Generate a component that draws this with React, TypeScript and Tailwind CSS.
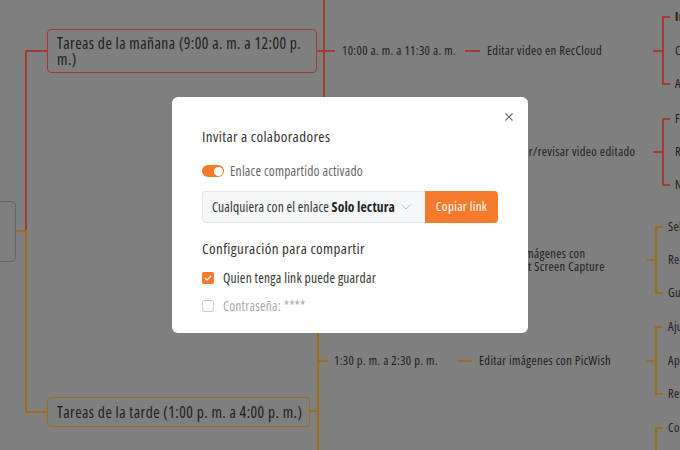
import React from "react";

const RED = "#a23b33";
const GOLD = "#9a6e1a";

function Row({
  x,
  y,
  h = 16,
  time,
  color,
  children,
}: {
  x: number;
  y: number;
  h?: number;
  time: string;
  color: string;
  children: React.ReactNode;
}) {
  return (
    <div
      className="absolute flex items-center text-[12.5px] leading-[14px] tracking-[0.35px] text-[#1d1d1d] whitespace-nowrap"
      style={{ left: x, top: y - h / 2, height: h }}
    >
      <span className="w-[123px]">{time}</span>
      <span className="w-[15px] h-[2px]" style={{ background: color }} />
      <span className="ml-[7px]">{children}</span>
    </div>
  );
}

function Bracket({
  from,
  x,
  top,
  h,
  color,
  labels,
  bold = false,
}: {
  from: number;
  x: number;
  top: number;
  h: number;
  color: string;
  labels: string[];
  bold?: boolean;
}) {
  return (
    <div className="absolute flex items-center" style={{ left: from, top: top - 8, height: h + 16 }}>
      <span className="h-[2px]" style={{ width: x - from, background: color }} />
      <span className="w-[8px] border-l-2 border-y-2" style={{ height: h + 2, borderColor: color }} />
      <div className="ml-[5px] flex h-full flex-col justify-between text-[12.5px] leading-[16px] tracking-[0.35px] text-[#1d1d1d] whitespace-nowrap">
        {labels.map((l, i) => (
          <span key={i} className={bold && i === 0 ? "font-bold" : ""}>
            {l}
          </span>
        ))}
      </div>
    </div>
  );
}

export default function App() {
  return (
    <div className="relative w-[680px] h-[450px] overflow-hidden bg-[#7f7f7f] font-['Open_Sans',sans-serif] [font-stretch:75%]">
      {/* main tree connectors */}
      <svg className="absolute inset-0" width="680" height="450" viewBox="0 0 680 450" fill="none">
        <g stroke={RED} strokeWidth="2">
          <path d="M26 51 V231 M26 51 H47" />
          <path d="M316 51 H335 M324 -5 V152 M324 152 H335" />
        </g>
        <g stroke={GOLD} strokeWidth="2">
          <path d="M15 231 H26 V412 H47" />
          <path d="M309 411 H318 M318 250 V455 M318 260 H328 M318 361 H328" />
        </g>
      </svg>

      {/* root node */}
      <div className="absolute left-[-100px] top-[201px] w-[116px] h-[61px] rounded-[5px] border-[1.5px] border-[#5c6472]" />

      {/* morning node */}
      <div
        className="absolute left-[47px] top-[29px] w-[270px] h-[44px] rounded-[4px] border-[1.5px] flex flex-col justify-center pl-[9px] text-[15.5px] leading-[16.5px] tracking-[0.45px] text-[#1d1d1d]"
        style={{ borderColor: RED }}
      >
        <span className="whitespace-nowrap">Tareas de la mañana (9:00 a. m. a 12:00 p.</span>
        <span>m.)</span>
      </div>

      {/* afternoon node */}
      <div
        className="absolute left-[47px] top-[397px] w-[263px] h-[30px] rounded-[4px] border-[1.5px] flex items-center pl-[9px] text-[15.5px] leading-[16px] tracking-[0.45px] text-[#1d1d1d] whitespace-nowrap"
        style={{ borderColor: GOLD }}
      >
        Tareas de la tarde (1:00 p. m. a 4:00 p. m.)
      </div>

      <Row x={342} y={51} time="10:00 a. m. a 11:30 a. m." color={RED}>
        Editar video en RecCloud
      </Row>
      <Row x={342} y={152} time="11:30 a. m. a 12:00 p. m." color={RED}>
        Descargar/revisar video editado
      </Row>
      <Row x={334} y={260} h={28} time="12:00 p. m. a 1:30 p. m." color={GOLD}>
        <span className="block leading-[13.5px]">
          Capturar imágenes con
          <br />
          Apowersoft Screen Capture
        </span>
      </Row>
      <Row x={334} y={361} time="1:30 p. m. a 2:30 p. m." color={GOLD}>
        Editar imágenes con PicWish
      </Row>

      <Bracket from={653} x={662} top={17} h={67} color={RED} labels={["Importar", "Cortar", "Añadir"]} bold />
      <Bracket from={653} x={662} top={119} h={66} color={RED} labels={["Formato", "Revisar", "Notas"]} />
      <Bracket from={647} x={655} top={227} h={66} color={GOLD} labels={["Seleccionar", "Recortar", "Guardar"]} />
      <Bracket from={647} x={655} top={327} h={67} color={GOLD} labels={["Ajustar", "Aplicar", "Resultado"]} />
      <Bracket from={647} x={655} top={428} h={67} color={GOLD} labels={["Comprimir", "Exportar", "Subir"]} />

      {/* dialog */}
      <div className="absolute left-[172px] top-[97px] w-[356px] h-[236px] rounded-[6px] bg-white px-[30px] pt-[29px]">
        <button className="absolute right-[15px] top-[16px] flex h-[8px] w-[8px] items-center justify-center">
          <svg width="8" height="8" viewBox="0 0 8 8" fill="none" stroke="#6b6b6b" strokeWidth="1.2">
            <path d="M0.5 0.5 L7.5 7.5 M7.5 0.5 L0.5 7.5" />
          </svg>
        </button>
        <div className="text-[15px] font-medium leading-[20px] tracking-[0.4px] text-[#333]">Invitar a colaboradores</div>

        <div className="mt-[15px] flex h-[20px] items-center gap-[6px]">
          <div className="relative h-[12px] w-[22px] rounded-full bg-[#f47b2b]">
            <div className="absolute right-[1.5px] top-[1.5px] h-[9px] w-[9px] rounded-full bg-white" />
          </div>
          <span className="text-[13.5px] leading-[20px] tracking-[0.2px] text-[#666]">Enlace compartido activado</span>
        </div>

        <div className="mt-[10px] flex h-[32px]">
          <div className="flex flex-1 items-center justify-between rounded-l-[4px] border border-r-0 border-[#e3e6ea] bg-[#f6f7f9] pl-[9px] pr-[14px]">
            <span className="text-[13.5px] tracking-[0.15px] text-[#333] whitespace-nowrap">
              Cualquiera con el enlace <span className="font-bold text-[#222]">Solo lectura</span>
            </span>
            <svg width="10" height="6" viewBox="0 0 10 6" fill="none" stroke="#b9bcc2" strokeWidth="1">
              <path d="M0.5 0.5 L5 5 L9.5 0.5" />
            </svg>
          </div>
          <button className="w-[73px] rounded-r-[4px] bg-[#f47b2b] text-[13px] font-medium tracking-[0.3px] text-white">Copiar link</button>
        </div>

        <div className="mt-[15px] text-[15px] leading-[20px] tracking-[0.4px] text-[#333]">Configuración para compartir</div>

        <div className="mt-[10px] flex h-[20px] items-center gap-[9px]">
          <div className="flex h-[12px] w-[12px] items-center justify-center rounded-[2px] bg-[#f47b2b]">
            <svg width="8" height="6" viewBox="0 0 8 6" fill="none" stroke="white" strokeWidth="1.2">
              <path d="M0.8 3 L3 5 L7.2 0.8" />
            </svg>
          </div>
          <span className="text-[13.5px] leading-[20px] tracking-[0.2px] text-[#333]">Quien tenga link puede guardar</span>
        </div>

        <div className="mt-[8px] flex h-[20px] items-center gap-[9px]">
          <div className="h-[12px] w-[12px] rounded-[2px] border border-[#cfcfcf] bg-white" />
          <span className="text-[13.5px] leading-[20px] tracking-[0.2px] text-[#a8a8a8]">Contraseña: ****</span>
        </div>
      </div>
    </div>
  );
}
